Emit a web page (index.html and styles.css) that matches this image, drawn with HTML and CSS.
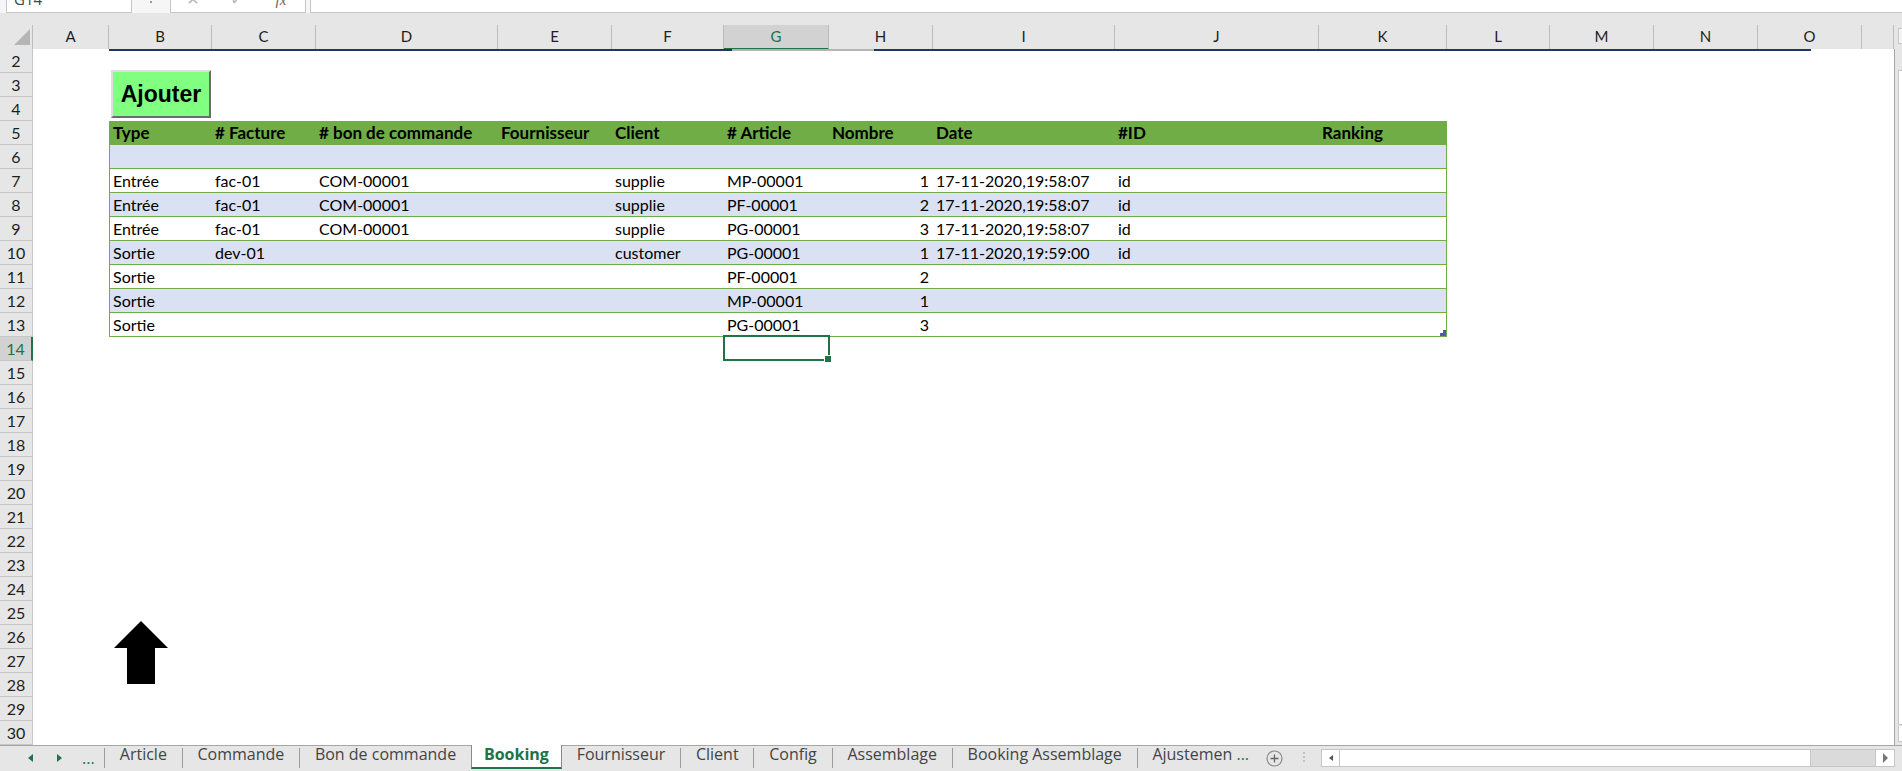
FILE: index.html
```html
<!DOCTYPE html>
<html lang="fr">
<head>
<meta charset="utf-8">
<title>Booking</title>
<link rel="stylesheet" href="styles.css">
</head>
<body>
<div class="app">
  <div class="fbar">
    <div class="namebox">G14</div>
    <div class="grip"></div>
    <div class="fxbox"><span class="fxi light">✕</span><span class="fxi light">✓</span><span class="fxi fxt">fx</span></div>
    <div class="finput"></div>
  </div>
  <div class="topgap"></div>
  <div class="main">
    <div class="grid">
      <div class="colhead">
        <div class="corner"><svg width="33" height="23" viewBox="0 0 33 23"><polygon points="30,4 30,20 14,20" fill="#b5b5b5"/></svg></div>
        <div class="ch">A</div><div class="ch">B</div><div class="ch">C</div><div class="ch">D</div><div class="ch">E</div><div class="ch">F</div><div class="ch sel">G</div><div class="ch">H</div><div class="ch">I</div><div class="ch">J</div><div class="ch">K</div><div class="ch">L</div><div class="ch">M</div><div class="ch">N</div><div class="ch">O</div><div class="ch"></div>
      </div>
      <div class="sheet">
        <div class="r"><div class="rh">2</div><div class="rc"></div></div>
        <div class="r"><div class="rh">3</div><div class="rc"></div></div>
        <div class="r"><div class="rh">4</div><div class="rc"></div></div>
        <div class="r"><div class="rh">5</div><div class="rc"><div class="tr th"><span>Type</span><span># Facture</span><span># bon de commande</span><span>Fournisseur</span><span>Client</span><span># Article</span><span>Nombre</span><span>Date</span><span>#ID</span><span>Ranking</span></div></div></div>
        <div class="r"><div class="rh">6</div><div class="rc"><div class="tr d b"><span></span><span></span><span></span><span></span><span></span><span></span><span></span><span></span><span></span><span></span></div></div></div>
        <div class="r"><div class="rh">7</div><div class="rc"><div class="tr d"><span>Entrée</span><span>fac-01</span><span>COM-00001</span><span></span><span>supplie</span><span>MP-00001</span><span class="num">1</span><span>17-11-2020,19:58:07</span><span>id</span><span></span></div></div></div>
        <div class="r"><div class="rh">8</div><div class="rc"><div class="tr d b"><span>Entrée</span><span>fac-01</span><span>COM-00001</span><span></span><span>supplie</span><span>PF-00001</span><span class="num">2</span><span>17-11-2020,19:58:07</span><span>id</span><span></span></div></div></div>
        <div class="r"><div class="rh">9</div><div class="rc"><div class="tr d"><span>Entrée</span><span>fac-01</span><span>COM-00001</span><span></span><span>supplie</span><span>PG-00001</span><span class="num">3</span><span>17-11-2020,19:58:07</span><span>id</span><span></span></div></div></div>
        <div class="r"><div class="rh">10</div><div class="rc"><div class="tr d b"><span>Sortie</span><span>dev-01</span><span></span><span></span><span>customer</span><span>PG-00001</span><span class="num">1</span><span>17-11-2020,19:59:00</span><span>id</span><span></span></div></div></div>
        <div class="r"><div class="rh">11</div><div class="rc"><div class="tr d"><span>Sortie</span><span></span><span></span><span></span><span></span><span>PF-00001</span><span class="num">2</span><span></span><span></span><span></span></div></div></div>
        <div class="r"><div class="rh">12</div><div class="rc"><div class="tr d b"><span>Sortie</span><span></span><span></span><span></span><span></span><span>MP-00001</span><span class="num">1</span><span></span><span></span><span></span></div></div></div>
        <div class="r"><div class="rh">13</div><div class="rc"><div class="tr d"><span>Sortie</span><span></span><span></span><span></span><span></span><span>PG-00001</span><span class="num">3</span><span></span><span></span><span></span></div></div></div>
        <div class="r"><div class="rh sel">14</div><div class="rc"></div></div>
        <div class="r"><div class="rh">15</div><div class="rc"></div></div>
        <div class="r"><div class="rh">16</div><div class="rc"></div></div>
        <div class="r"><div class="rh">17</div><div class="rc"></div></div>
        <div class="r"><div class="rh">18</div><div class="rc"></div></div>
        <div class="r"><div class="rh">19</div><div class="rc"></div></div>
        <div class="r"><div class="rh">20</div><div class="rc"></div></div>
        <div class="r"><div class="rh">21</div><div class="rc"></div></div>
        <div class="r"><div class="rh">22</div><div class="rc"></div></div>
        <div class="r"><div class="rh">23</div><div class="rc"></div></div>
        <div class="r"><div class="rh">24</div><div class="rc"></div></div>
        <div class="r"><div class="rh">25</div><div class="rc"></div></div>
        <div class="r"><div class="rh">26</div><div class="rc"></div></div>
        <div class="r"><div class="rh">27</div><div class="rc"></div></div>
        <div class="r"><div class="rh">28</div><div class="rc"></div></div>
        <div class="r"><div class="rh">29</div><div class="rc"></div></div>
        <div class="r"><div class="rh">30</div><div class="rc"></div></div>

        <div class="blueline"></div>
        <div class="btn">Ajouter</div>
        <svg class="arrow" width="54" height="63" viewBox="0 0 54 63"><polygon points="27,0 54,27 41,27 41,63 13,63 13,27 0,27" fill="#000"/></svg>
        <svg class="rz" width="6" height="6" viewBox="0 0 6 6"><path d="M3 0H6V6H0V3H3Z" fill="#4a5cb5"/></svg>
        <div class="selcell"></div>
      </div>
    </div>
    <div class="vscroll">
      <div class="vs-head"><div class="vs-up"></div></div>
      <div class="vs-body"><div class="vs-thumb"></div><div class="vs-down"></div></div>
    </div>
  </div>
  <div class="tabbar">
    <div class="nav"><span class="tri-l"></span><span class="tri-r"></span><span class="navmore">...</span></div>
    <span class="sep"></span>
    <div class="tab">Article</div>
    <span class="sep"></span>
    <div class="tab">Commande</div>
    <span class="sep"></span>
    <div class="tab">Bon de commande</div>
    <div class="tab active">Booking</div>
    <div class="tab">Fournisseur</div>
    <span class="sep"></span>
    <div class="tab">Client</div>
    <span class="sep"></span>
    <div class="tab">Config</div>
    <span class="sep"></span>
    <div class="tab">Assemblage</div>
    <span class="sep"></span>
    <div class="tab">Booking Assemblage</div>
    <span class="sep"></span>
    <div class="tab">Ajustemen <span class="more">...</span></div>
    <div class="tail">
      <svg class="plus" width="17" height="17" viewBox="0 0 17 17"><circle cx="8.5" cy="8.5" r="7.5" fill="none" stroke="#8a8a8a" stroke-width="1.2"/><path d="M8.5 4.5V12.5M4.5 8.5H12.5" stroke="#666" stroke-width="1.3"/></svg>
      <span class="vdots"></span>
      <div class="hscroll">
        <div class="hs-l"><span class="hs-tl"></span></div>
        <div class="hs-thumb"></div>
        <div class="hs-track"></div>
        <div class="hs-r"><span class="hs-tr"></span></div>
      </div>
    </div>
  </div>
</div>
</body>
</html>
```

FILE: styles.css
```css
* { box-sizing: border-box; margin: 0; padding: 0; }
html, body { width: 1902px; height: 771px; overflow: hidden; background: #fff; }
body { font-family: Lato, "Open Sans", sans-serif; color: #000; }

.app { display: flex; flex-direction: column; width: 1902px; height: 771px; }

/* formula bar (cut off at top) */
.fbar { height: 13px; flex: none; display: flex; align-items: flex-start; overflow: hidden; background: #f6f6f6; }
.namebox { margin: -12px 0 0 6px; width: 126px; height: 25px; flex: none; border: 1px solid #c6c6c6; background: #fff; font: 15px/20px "Open Sans", sans-serif; color: #444; padding-left: 7px; }
.grip { width: 2px; height: 2px; margin: 1px 0 0 18px; background: #9a9a9a; flex: none; }
.fxbox { margin: -12px 0 0 18px; width: 136px; height: 25px; flex: none; border: 1px solid #c6c6c6; background: #fff; display: flex; }
.fxi { width: 44px; text-align: center; font: 16px/22px "DejaVu Sans", sans-serif; }
.fxi.light { color: #b8b8b8; }
.fxt { font: italic 15px/22px "Liberation Serif", serif; color: #666; }
.finput { margin: -12px -2px 0 4px; flex: 1; height: 25px; border: 1px solid #c6c6c6; background: #fff; }

.topgap { height: 12px; flex: none; background: #e6e6e6; }

.main { display: flex; height: 720px; flex: none; }
.grid { width: 1894px; flex: none; display: flex; flex-direction: column; }

/* column headers */
.colhead { display: grid; grid-template-columns: 33px 76px 103px 104px 182px 114px 112px 105px 104px 182px 204px 128px 103px 104px 104px 104px 32px; height: 24px; flex: none; background: #e6e6e6; }
.corner { border-right: 1px solid #bdbdbd; border-bottom: 1px solid #c8c8c8; }
.corner svg { display: block; }
.ch { border-right: 1px solid #bdbdbd; border-bottom: 1px solid #c8c8c8; text-align: center; font: 15px/23px Lato, sans-serif; color: #1e1e1e; }
.ch.sel { background: #d2d2d2; color: #217346; border-bottom: 2px solid #217346; }

/* sheet */
.sheet { position: relative; flex: 1; display: flex; flex-direction: column; background: #fff; }
.r { display: flex; height: 24px; flex: none; }
.rh { width: 33px; flex: none; background: #e6e6e6; border-right: 1px solid #c6c6c6; border-bottom: 1px solid #c6c6c6; text-align: center; font: 16px/23px Lato, sans-serif; color: #1e1e1e; }
.rh.sel { background: #d2d2d2; color: #217346; border-right: 2px solid #217346; }
.rc { flex: 1; padding-left: 76px; }

/* table */
.tr { display: grid; grid-template-columns: 102px 104px 182px 114px 112px 105px 104px 182px 204px 127px; width: 1338px; height: 24px; border-left: 1px solid #70ad47; border-right: 1px solid #70ad47; font: 16px/24px Lato, sans-serif; color: #000; }
.tr > span { padding: 0 3px; white-space: nowrap; }
.tr > span.num { text-align: right; padding-right: 4px; }
.th { background: #70ad47; font-weight: 700; font-size: 17px; }
.d { border-bottom: 1px solid #70ad47; }
.b { background: #d9e1f2; }

/* floating shapes on the sheet canvas */
.blueline { position: absolute; left: 109px; top: 0; width: 1702px; height: 2px; background: linear-gradient(90deg, #1f3763 0 623px, #b4b4b4 623px 765px, #1f3763 765px); }
.btn { position: absolute; left: 111px; top: 21px; width: 100px; height: 48px; background: #80ff80; border: 2px solid; border-color: #dedede #6b6b6b #6b6b6b #dedede; display: flex; align-items: center; justify-content: center; font: 700 23px "Liberation Sans", Arial, sans-serif; color: #000; }
.arrow { position: absolute; left: 114px; top: 572px; }
.rz { position: absolute; left: 1440px; top: 281px; }
.selcell { position: absolute; left: 723px; top: 286px; width: 107px; height: 26px; border: 2px solid #217346; }
.selcell::after { content: ""; position: absolute; right: -4px; bottom: -4px; width: 6px; height: 6px; background: #217346; border: 1px solid #fff; }

/* vertical scrollbar (mostly off-screen) */
.vscroll { width: 8px; flex: none; display: flex; flex-direction: column; background: #e6e6e6; }
.vs-head { height: 24px; flex: none; padding: 3px 0 0 4px; }
.vs-up { height: 16px; border: 1px solid #c6c6c6; border-right: none; background: #f4f4f4; }
.vs-body { flex: 1; border-left: 1px solid #a6a6a6; padding-left: 3px; display: flex; flex-direction: column; }
.vs-thumb { margin-top: 21px; height: 655px; border-left: 1px solid #c6c6c6; border-top: 1px solid #c6c6c6; border-bottom: 1px solid #c6c6c6; background: #fff; }
.vs-down { margin-top: 1px; height: 16px; border-left: 1px solid #c6c6c6; border-bottom: 1px solid #c6c6c6; background: #fff; }

/* sheet tabs */
.tabbar { height: 26px; flex: none; display: flex; align-items: flex-start; background: #e6e6e6; border-top: 1px solid #a6a6a6; font: 16px "Open Sans", sans-serif; color: #444; }
.nav { width: 104px; height: 24px; flex: none; display: flex; align-items: center; padding-left: 28px; }
.tri-l { width: 0; height: 0; border-top: 4.5px solid transparent; border-bottom: 4.5px solid transparent; border-right: 5px solid #217346; }
.tri-r { width: 0; height: 0; border-top: 4.5px solid transparent; border-bottom: 4.5px solid transparent; border-left: 5px solid #217346; margin-left: 24px; }
.navmore { margin-left: 20px; color: #217346; line-height: 18px; }
.sep { width: 1px; height: 20px; flex: none; margin-top: 2px; background: #9c9c9c; }
.tab { padding: 0 14.8px; line-height: 18px; margin-top: -1px; white-space: nowrap; flex: none; }
.tab.active { background: #fff; color: #217346; font-weight: 700; padding: 0 12px; height: 24px; border-left: 1px solid #8a8a8a; border-right: 1px solid #8a8a8a; border-bottom: 2px solid #217346; }
.more { color: #217346; }
.tail { margin-left: auto; display: flex; align-items: flex-start; flex: none; }
.plus { margin-top: 4px; display: block; }
.vdots { width: 2px; height: 2px; margin: 6px 0 0 20px; background: #c2c2c2; box-shadow: 0 4px #c2c2c2, 0 8px #c2c2c2; }
.hscroll { margin: 3px 7px 0 16px; width: 574px; height: 18px; border: 1px solid #c6c6c6; display: flex; background: #fff; }
.hs-l { width: 18px; border-right: 1px solid #c6c6c6; display: flex; align-items: center; justify-content: center; }
.hs-tl { width: 0; height: 0; border-top: 3.5px solid transparent; border-bottom: 3.5px solid transparent; border-right: 4px solid #555; }
.hs-thumb { width: 471px; border-right: 1px solid #c6c6c6; background: #fff; }
.hs-track { flex: 1; background: #dadada; }
.hs-r { width: 19px; border-left: 1px solid #c6c6c6; display: flex; align-items: center; justify-content: center; }
.hs-tr { width: 0; height: 0; border-top: 5px solid transparent; border-bottom: 5px solid transparent; border-left: 5px solid #777; }
```
